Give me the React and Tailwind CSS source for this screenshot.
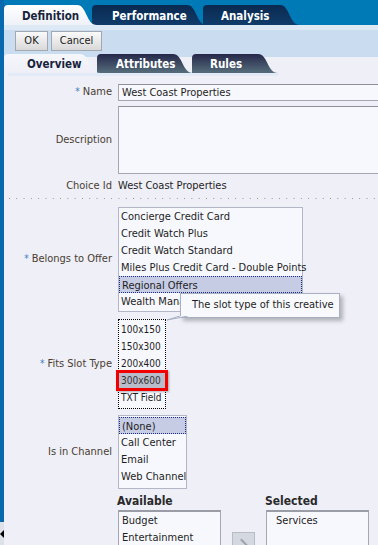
import React from "react";

const TOP_TABS = [
  { label: "Definition", width: 93, pad: 18, active: true },
  { label: "Performance", width: 115, pad: 20, overlap: 5 },
  { label: "Analysis", width: 97, pad: 18, overlap: 4 }
];

const SUB_TABS = [
  { label: "Overview", width: 96, pad: 23, active: true },
  { label: "Attributes", width: 96, pad: 19, overlap: 3 },
  { label: "Rules", width: 86, pad: 18, overlap: 1 }
];

const OFFERS = [
  "Concierge Credit Card",
  "Credit Watch Plus",
  "Credit Watch Standard",
  "Miles Plus Credit Card - Double Points",
  "Regional Offers",
  "Wealth Management"
];

const SLOTS = ["100x150", "150x300", "200x400", "300x600", "TXT Field"];
const CHANNELS = ["(None)", "Call Center", "Email", "Web Channel"];

const Tab = ({ tab, height, sub, z }) => {
  const w = tab.width;
  const h = height;
  const d = `M0 ${h} L0 4 Q0 0 4 0 L${w - 20} 0 C${w - 10} 0 ${w - 11} ${h} ${w} ${h} Z`;
  const id = `g-${tab.label}`;
  let stops;
  if (tab.active) {
    stops = sub ? ["#f6f7fc", "#eeeff7"] : ["#ffffff", "#eef1f8"];
  } else {
    stops = sub ? ["#25284a", "#566e7c"] : ["#0a2950", "#103c6a"];
  }
  return (
    <div
      className="relative shrink-0"
      style={{ width: w, height: h, marginLeft: tab.overlap ? -tab.overlap : 0, zIndex: z }}
    >
      <svg className="absolute inset-0" width={w} height={h} viewBox={`0 0 ${w} ${h}`}>
        <defs>
          <linearGradient id={id} x1="0" y1="0" x2="0" y2="1">
            <stop offset="0" stopColor={stops[0]} />
            <stop offset="1" stopColor={stops[1]} />
          </linearGradient>
        </defs>
        <path d={d} fill={`url(#${id})`} />
      </svg>
      <span
        className={`relative block font-bold text-[11.5px] leading-none ${
          tab.active ? "text-[#18243c]" : "text-white"
        }`}
        style={{ paddingLeft: tab.pad, paddingTop: sub ? 5 : 6 }}
      >
        {tab.label}
      </span>
    </div>
  );
};

const Label = ({ children, required }) => (
  <div className="w-[108px] shrink-0 text-right text-[#4b3d31]">
    {required && <span className="mr-[3px] text-[10px] text-[#3d7fc4]">*</span>}
    {children}
  </div>
);

const ListItem = ({ children, selected, highlight }) => (
  <div
    className={`relative h-[17px] whitespace-nowrap pl-[2px] leading-[17px] ${
      selected ? "border border-dotted border-[#1c2e80] bg-[#c6cce4] leading-[15px]" : ""
    } ${highlight ? "bg-[#b9bccb] text-[#333]" : "text-[#1e1e1e]"}`}
  >
    {children}
    {highlight && (
      <div className="absolute -top-[2px] -bottom-[2px] -left-[3px] -right-[3px] border-[3px] border-[#f20000] shadow-[1px_1px_2px_rgba(0,0,0,0.3)]" />
    )}
  </div>
);

export default function App() {
  return (
    <div className="relative flex h-[545px] w-[378px] overflow-hidden font-['DejaVu_Sans_Condensed','DejaVu_Sans',sans-serif] text-[11px]">
      <div className="flex w-[4px] shrink-0 flex-col">
        <div className="h-[522px] shrink-0 bg-[#0a68ae]" />
        <div className="flex flex-1 items-start bg-[#dde1ea] pt-[8px]">
          <div className="h-0 w-0 border-y-[4px] border-r-[4px] border-y-transparent border-r-black" />
        </div>
      </div>

      <div className="flex min-w-0 flex-1 flex-col overflow-hidden bg-[#eeeff7] [&>*]:shrink-0">
        <div className="flex h-[25px] items-end bg-[#0079b7]">
          {TOP_TABS.map((tab, i) => (
            <Tab key={tab.label} tab={tab} height={20} z={tab.active ? 10 : i} />
          ))}
        </div>
        <div className="h-[5px] bg-[#dde9f5]" />
        <div className="flex h-[24px] gap-[3px] bg-[#c9dcf0] pl-[11px] pt-[1px]">
          <button className="h-[20px] w-[33px] border border-[#a3a8b0] bg-[linear-gradient(#fafafa,#d9d9d9)] text-[11px] text-[#222]">
            OK
          </button>
          <button className="h-[20px] w-[51px] border border-[#a3a8b0] bg-[linear-gradient(#fafafa,#d9d9d9)] text-[11px] text-[#222]">
            Cancel
          </button>
        </div>
        <div className="flex h-[19px] items-end bg-[linear-gradient(#c9dcf0_3px,#eeeff7_3px)]">
          {SUB_TABS.map((tab, i) => (
            <Tab key={tab.label} tab={tab} height={19} sub z={tab.active ? 10 : i} />
          ))}
        </div>
        <div className="ml-[4px] h-[3px] w-[270px] bg-[#e2eaf7]" />

        <div className="mt-[8px] flex items-center">
          <Label required>Name</Label>
          <div className="ml-[6px] h-[17px] w-[270px] shrink-0 border border-[#a4a6b0] border-t-[#8e9099] bg-[#f7f8fd] pl-[3px] leading-[15px] text-[#1e1e1e]">
            West Coast Properties
          </div>
        </div>

        <div className="mt-[5px] flex items-center">
          <Label>Description</Label>
          <div className="ml-[6px] h-[68px] w-[270px] shrink-0 border border-[#a4a6b0] border-t-[#8e9099] bg-[#f7f8fd]" />
        </div>

        <div className="mt-[4px] flex h-[16px] items-center">
          <Label>Choice Id</Label>
          <div className="ml-[6px] text-[#1e1e1e]">West Coast Properties</div>
        </div>

        <div className="ml-[5px] mt-[4px] h-px bg-[linear-gradient(to_right,#8d8f98_1px,transparent_1px)] bg-[length:7.3px_1px]" />

        <div className="mt-[8px] flex items-center">
          <Label required>Belongs to Offer</Label>
          <div className="ml-[6px] w-[185px] shrink-0 border border-[#b2b6c6] bg-[#f7f8fd] pb-[1px]">
            {OFFERS.map((o) => (
              <ListItem key={o} selected={o === "Regional Offers"}>
                {o}
              </ListItem>
            ))}
          </div>
        </div>

        <div className="mt-[7px] flex items-center">
          <Label required>Fits Slot Type</Label>
          <div className="ml-[6px] w-[48px] shrink-0 border border-dotted border-black bg-[#f7f8fd] pb-[2px] pt-[1px] text-[10px]">
            {SLOTS.map((s) => (
              <ListItem key={s} highlight={s === "300x600"}>
                {s}
              </ListItem>
            ))}
          </div>
        </div>

        <div className="mt-[6px] flex items-center">
          <Label>Is in Channel</Label>
          <div className="ml-[6px] w-[69px] shrink-0 border border-[#b2b6c6] bg-[#f7f8fd] pb-[3px] pt-[1px]">
            {CHANNELS.map((c) => (
              <ListItem key={c} selected={c === "(None)"}>
                {c}
              </ListItem>
            ))}
          </div>
        </div>

        <div className="ml-[113px] mt-[4px] flex h-[15px] items-center text-[12px] font-bold text-[#2a2a2a]">
          <div className="w-[148px]">Available</div>
          <div>Selected</div>
        </div>

        <div className="ml-[114px] mt-[2px] flex items-start">
          <div className="h-[60px] w-[103px] shrink-0 border border-[#a4a6b0] border-t-2 border-t-[#9a9ca6] bg-[#f7f8fd] pl-[3px] text-[#1e1e1e]">
            <div className="h-[17px] leading-[17px]">Budget</div>
            <div className="h-[17px] leading-[17px]">Entertainment</div>
          </div>
          <div className="ml-[11px] mt-[22px] flex h-[24px] w-[23px] shrink-0 justify-center border border-[#b8bcc6] bg-[#d4d8e0] pt-[5px]">
            <div className="h-[9px] w-[2px] -rotate-45 bg-[#9ea2ac]" />
          </div>
          <div className="ml-[11px] h-[60px] w-[103px] shrink-0 border border-[#a4a6b0] border-t-2 border-t-[#9a9ca6] bg-[#f7f8fd] pl-[9px] text-[#1e1e1e]">
            <div className="h-[17px] leading-[17px]">Services</div>
          </div>
        </div>
      </div>

      <div className="absolute left-[180px] top-[293px] flex h-[25px] w-[160px] items-center whitespace-nowrap border border-[#a8aec4] bg-[#f8f9fd] pl-[11px] text-[11px] text-[#1e1e1e] shadow-[3px_3px_4px_rgba(0,0,0,0.25)]">
        The slot type of this creative
      </div>
      <svg className="absolute left-[165px] top-[316px]" width="30" height="6" viewBox="0 0 30 6">
        <path d="M15 0 L2 4 L23 0" fill="#f8f9fd" stroke="#a8aec4" strokeWidth="1" />
      </svg>
    </div>
  );
}
